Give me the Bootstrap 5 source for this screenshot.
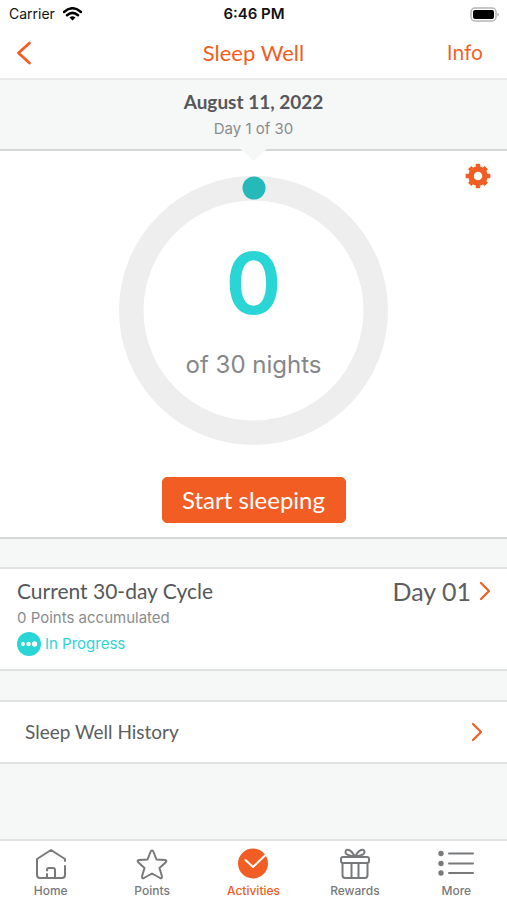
<!DOCTYPE html>
<html lang="en">
<head>
<meta charset="utf-8">
<meta name="viewport" content="width=device-width, initial-scale=1">
<title>Sleep Well</title>
<link rel="stylesheet" href="https://cdn.jsdelivr.net/npm/bootstrap@5.3.0/dist/css/bootstrap.min.css">
<style>
  :root { --orange: #f15d22; --teal: #2ad5d5; --ink: #5c5e60; --soft: #8a8c8e; --rule: #e1e3e3; --wash: #f6f8f8; }
  body { font-family: Inter, "Liberation Sans", sans-serif; background: var(--wash); color: var(--ink); }
  svg { display: block; fill: none; stroke-linecap: round; stroke-linejoin: round; }
  h1, h2, p { margin: 0; }
  .brand-face { font-family: Lato, "Open Sans", sans-serif; }
  .side { flex: 1 1 0; }
  .status-bar { height: 28px; padding: 0 8px 0 9px; font-size: 14px; line-height: 20px; color: #111; }
  .time { font-size: 15px; }
  .title-bar { height: 52px; padding: 0 24px 0 16px; border-bottom: 2px solid #e9eaea; }
  .title-bar h1 { font-size: 22px; line-height: 28px; padding-left: 8px; }
  .title-bar a { font-size: 20px; line-height: 28px; }
  .orange, .orange:hover { color: var(--orange); }
  .day-bar { height: 71px; padding-top: 8px; border-bottom: 2px solid #d6d8d8; background: var(--wash); z-index: 1; }
  .day-bar h2 { font-size: 19px; line-height: 28px; font-weight: 700; }
  .day-bar p { font-size: 15px; line-height: 26px; color: var(--soft); }
  .day-bar::after { content: ""; position: absolute; top: 100%; left: 50%; width: 26px; height: 12px; margin-left: -13px; background: var(--wash); clip-path: polygon(0 0, 100% 0, 50% 100%); }
  .tracker { padding: 25px 0 14px; border-bottom: 2px solid #d6d8d8; }
  .settings { top: 12px; right: 16px; }
  .dial { display: grid; place-items: center; }
  .dial > * { grid-area: 1 / 1; }
  .count { font-size: 85px; line-height: 90px; font-weight: 600; color: var(--teal); }
  .total { font-size: 24px; line-height: 28px; color: #858789; margin-top: 22px; }
  .dial-text { padding-bottom: 4px; }
  .start { margin-top: 32px; padding: 7px 19px; min-width: 184px; font-size: 24px; line-height: 30px; --bs-btn-color: #fff; --bs-btn-bg: var(--orange); --bs-btn-border-color: var(--orange); --bs-btn-hover-color: #fff; --bs-btn-hover-bg: #dc4f18; --bs-btn-hover-border-color: #dc4f18; --bs-btn-border-radius: 5px; }
  .panel { background: #fff; border-top: 2px solid var(--rule); border-bottom: 2px solid var(--rule); color: var(--ink); margin-top: 28px; }
  .cycle { padding: 8px 16px 12px 17px; }
  .cycle h2 { font-size: 21px; line-height: 28px; }
  .cycle h2, .day-bar h2 { color: #55575a; }
  .cycle h2 { font-weight: 400; }
  .cycle p { font-size: 15px; line-height: 26px; color: var(--soft); }
  .cycle .state { color: var(--teal); }
  .day-no { font-size: 25px; line-height: 28px; }
  .history { margin-top: 29px; height: 64px; padding: 0 24px 0 25px; font-size: 19px; }
  .tabs { height: 61px; border-top: 2px solid var(--rule); padding-top: 7px; }
  .tabs a { font-size: 12px; line-height: 18px; font-weight: 500; color: #77797b; }
  .tabs svg { height: 32px; margin: 0 auto 2px; stroke: #77797b; stroke-width: 2; }
  .tabs a.active { color: var(--orange); }
</style>
<script src="https://cdn.jsdelivr.net/npm/bootstrap@5.3.0/dist/js/bootstrap.bundle.min.js"></script>
</head>
<body class="d-flex flex-column min-vh-100">
<header class="bg-white">
  <div class="status-bar d-flex align-items-center">
    <div class="side d-flex align-items-center gap-2">Carrier
      <svg width="19" height="14" viewBox="0 0 19 14" aria-label="Wi-Fi" stroke="#000" stroke-width="2.5" stroke-linecap="butt"><path d="M1 5Q9.500-2.500 18 5M4 8.300Q9.500 3.500 15 8.300"/><path d="M6.500 10.500Q9.500 8 12.500 10.500L9.500 13.500Z" fill="#000" stroke="none"/></svg>
    </div>
    <div class="time fw-semibold">6:46 PM</div>
    <div class="side d-flex justify-content-end">
      <svg width="29" height="15" viewBox="0 0 29 15" aria-label="Battery"><rect x="1" y="1" width="25" height="13" rx="4" stroke="#b5b5b5" stroke-width="1.500"/><rect x="3" y="3" width="21" height="9" rx="2" fill="#000"/><path d="M27.500 5.500Q30 7.500 27.500 9.500Z" fill="#aaa"/></svg>
    </div>
  </div>
  <nav class="title-bar d-flex align-items-center">
    <div class="side d-flex"><a href="#" aria-label="Back"><svg width="16" height="24" viewBox="0 0 16 24" stroke="#f15d22" stroke-width="2.800"><path d="M13.500 2 2.500 12 13.500 22"/></svg></a></div>
    <h1 class="brand-face orange fw-normal">Sleep Well</h1>
    <div class="side text-end"><a href="#" class="orange text-decoration-none">Info</a></div>
  </nav>
</header>

<main class="flex-grow-1">
  <section class="day-bar text-center position-relative">
    <h2 class="brand-face">August 11, 2022</h2>
    <p>Day 1 of 30</p>
  </section>

  <section class="tracker bg-white text-center position-relative">
    <button type="button" class="settings btn p-0 border-0 position-absolute" aria-label="Settings">
      <svg width="26" height="26" viewBox="-13 -13 26 26"><circle r="7" stroke="#f15d22" stroke-width="5.500"/><path d="M0-9V-12.300M0 9V12.300M-9 0H-12.300M9 0H12.300M-6.500-6.500-8.300-8.300M6.500 6.500 8.300 8.300M6.500-6.500 8.300-8.300M-6.500 6.500-8.300 8.300" stroke="#f15d22" stroke-width="4.600" stroke-linecap="butt" style="stroke-linecap:butt"/></svg>
    </button>
    <div class="dial">
      <svg width="269" height="269" viewBox="0 0 269 269" aria-hidden="true"><circle cx="134.500" cy="134.500" r="122.250" stroke="#eeeeee" stroke-width="24.500"/><circle cx="135" cy="12" r="11.500" fill="#26b9b9"/></svg>
      <div class="dial-text"><div class="count">0</div><div class="total">of 30 nights</div></div>
    </div>
    <button type="button" class="btn start brand-face">Start sleeping</button>
  </section>

  <a href="#" class="panel cycle d-flex justify-content-between text-decoration-none">
    <div>
      <h2 class="brand-face">Current 30-day Cycle</h2>
      <p>0 Points accumulated</p>
      <p class="state d-flex align-items-center gap-1"><svg width="24" height="24" viewBox="0 0 24 24" aria-hidden="true"><circle cx="12" cy="12" r="12" fill="#2ad5d5"/><g fill="#fff"><circle cx="6" cy="12" r="1.900"/><circle cx="11.500" cy="12" r="2.200"/><circle cx="17.500" cy="12" r="2.700"/></g></svg><span>In Progress</span></p>
    </div>
    <div class="d-flex gap-2 align-self-start align-items-center"><span class="day-no brand-face">Day 01</span>
      <svg width="12" height="20" viewBox="0 0 12 20" stroke="#f15d22" stroke-width="2.200" aria-hidden="true"><path d="M2 2 10 10 2 18"/></svg></div>
  </a>

  <a href="#" class="panel history d-flex align-items-center justify-content-between text-decoration-none brand-face">
    <span>Sleep Well History</span>
    <svg width="12" height="20" viewBox="0 0 12 20" stroke="#f15d22" stroke-width="2.200" aria-hidden="true"><path d="M2 2 10 10 2 18"/></svg>
  </a>
</main>

<nav class="tabs row g-0 bg-white text-center" aria-label="Main">
  <a class="col text-decoration-none" href="#"><svg width="32" viewBox="0 0 32 32"><path d="M30 13V11L16 2 2 11V27Q2 30 5 30H27Q30 30 30 27V18M12 30V26M12 22.500V22Q12 20 14 20H18Q20 20 20 22V30"/></svg>Home</a>
  <a class="col text-decoration-none" href="#"><svg width="32" viewBox="0 0 32 32"><path d="M16 2.500Q17 2.500 17.500 4L20.500 11.500 29 12Q31.500 12.500 29.500 14.500L23.500 20 26 28.500Q26 31 24 30L16 25.500 8 30Q6 31 6 28.500L8.500 20 2.500 14.500Q.5 12.500 3 12L11.500 11.500 14.500 4Q15 2.500 16 2.500Z"/></svg>Points</a>
  <a class="col text-decoration-none active" aria-current="page" href="#"><svg width="32" viewBox="0 0 32 32"><circle cx="15" cy="15.500" r="15" fill="#f15d22" stroke="none"/><path d="M7.500 12 15 19 27 7.500" stroke="#fff"/></svg>Activities</a>
  <a class="col text-decoration-none" href="#"><svg width="32" viewBox="0 0 32 32"><path d="M4 9H28Q30 9 30 11V13Q30 15 28 15H4Q2 15 2 13V11Q2 9 4 9ZM3.500 15V27Q3.500 30 6 30H26Q28.500 30 28.500 27V15M12.500 15V30M19.500 15V30M16 9C12 1 7 0 6.500 4 6.500 8 11 6.500 16 9M16 9C20 1 25 0 25.500 4 25.500 8 21 6.500 16 9"/></svg>Rewards</a>
  <a class="col text-decoration-none" href="#"><svg width="38" viewBox="0 0 38 32"><path d="M12 5.500H36M12 15.500H36M12 25H36"/><g fill="#77797b" stroke="none"><circle cx="4" cy="5.500" r="2.700"/><circle cx="4" cy="15.500" r="2.700"/><circle cx="4" cy="25" r="2.700"/></g></svg>More</a>
</nav>
</body>
</html>
